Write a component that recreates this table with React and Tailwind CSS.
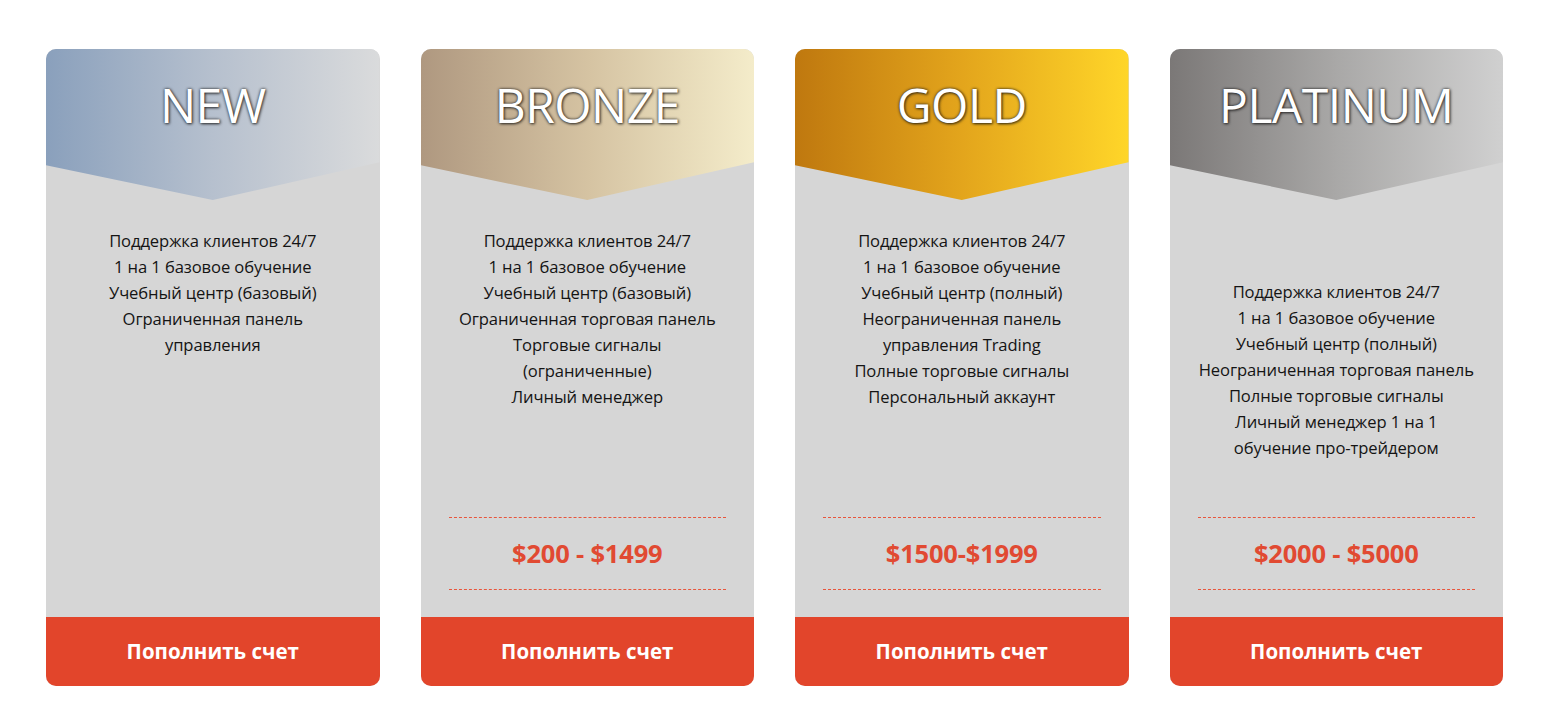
import React from 'react';

const plans = [
  {
    name: 'NEW',
    grad: 'bg-[linear-gradient(90deg,#8aa0bc_0%,#b6c0ce_50%,#dadbdc_100%)]',
    features: ['Поддержка клиентов 24/7', '1 на 1 базовое обучение', 'Учебный центр (базовый)', 'Ограниченная панель', 'управления'],
    price: null,
    offset: 'pt-[28px]',
  },
  {
    name: 'BRONZE',
    grad: 'bg-[linear-gradient(90deg,#af9880_0%,#d5c3a2_50%,#f4ecca_100%)]',
    features: ['Поддержка клиентов 24/7', '1 на 1 базовое обучение', 'Учебный центр (базовый)', 'Ограниченная торговая панель', 'Торговые сигналы', '(ограниченные)', 'Личный менеджер'],
    price: '$200 - $1499',
    offset: 'pt-[28px]',
  },
  {
    name: 'GOLD',
    grad: 'bg-[linear-gradient(90deg,#bf780f_0%,#e3a51c_50%,#ffd629_100%)]',
    features: ['Поддержка клиентов 24/7', '1 на 1 базовое обучение', 'Учебный центр (полный)', 'Неограниченная панель', 'управления Trading', 'Полные торговые сигналы', 'Персональный аккаунт'],
    price: '$1500-$1999',
    offset: 'pt-[28px]',
  },
  {
    name: 'PLATINUM',
    grad: 'bg-[linear-gradient(90deg,#7b7877_0%,#a9a8a7_50%,#d0d0d0_100%)]',
    features: ['Поддержка клиентов 24/7', '1 на 1 базовое обучение', 'Учебный центр (полный)', 'Неограниченная торговая панель', 'Полные торговые сигналы', 'Личный менеджер 1 на 1', 'обучение про-трейдером'],
    price: '$2000 - $5000',
    offset: 'pt-[79px]',
  },
];

const PlanCard = ({ plan }) => (
  <div className="w-[333.5px] h-[637px] bg-[#d6d6d6] rounded-[10px] overflow-hidden flex flex-col">
    <div className={`h-[151px] shrink-0 ${plan.grad} [clip-path:polygon(0_0,100%_0,100%_75%,50%_100%,0_77%)] flex justify-center pt-[27px]`}>
      <h2 className="text-white text-[48px] leading-[58px] font-[Open_Sans,sans-serif] tracking-[-0.5px] [text-shadow:0_0_3px_rgba(30,30,30,0.95),1px_1px_3px_rgba(0,0,0,0.6)]">
        {plan.name}
      </h2>
    </div>
    <ul className={`${plan.offset} flex flex-col items-center text-[16.6px] leading-[26px] text-[#141414] font-[Open_Sans,sans-serif] text-center tracking-[-0.1px]`}>
      {plan.features.map((f, i) => (
        <li key={i}>{f}</li>
      ))}
    </ul>
    <div className="mt-auto">
      {plan.price && (
        <div className="mx-[28px] border-t border-b border-dashed border-[#e8553c] h-[73px] flex items-center justify-center">
          <span className="text-[#e14a32] font-bold text-[25.5px] font-[Open_Sans,sans-serif] tracking-[-0.2px]">{plan.price}</span>
        </div>
      )}
      <button className="mt-[27px] w-full h-[69px] bg-[#e2452b] text-white font-bold text-[20.5px] font-[Open_Sans,sans-serif] flex items-center justify-center">
        Пополнить счет
      </button>
    </div>
  </div>
);

export default function App() {
  return (
    <div className="w-[1545px] h-[725px] bg-white flex gap-[41px] pl-[46px] pt-[49px]">
      {plans.map((p) => (
        <PlanCard key={p.name} plan={p} />
      ))}
    </div>
  );
}
